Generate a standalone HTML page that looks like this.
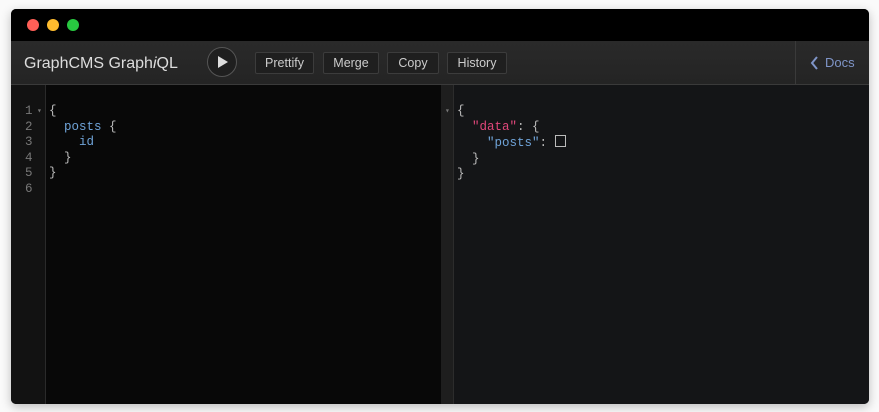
<!DOCTYPE html>
<html><head><style>
body{margin:0;width:879px;height:412px;background:#fafafa;position:relative;overflow:hidden;font-family:"Liberation Sans",sans-serif}
.win{position:absolute;left:11px;top:9px;width:858px;height:395px;border-radius:5px;overflow:hidden;background:#0a0a0a;box-shadow:0 3px 10px rgba(0,0,0,.25)}
.title{position:absolute;left:0;top:0;width:100%;height:32px;background:#000}
.dot{position:absolute;top:10px;width:12px;height:12px;border-radius:50%}
.tb{position:absolute;left:0;top:32px;width:100%;height:43px;background:linear-gradient(#2a2a2a,#242424);border-bottom:1px solid #3a3a3a}
.logo{position:absolute;left:13px;top:14px;font-size:16px;color:#ddd}
.play{position:absolute;left:196px;top:6px;width:28px;height:28px;border-radius:50%;border:1px solid #555;background:#1f1f1f}
.btn{position:absolute;top:11px;height:20px;border:1px solid #3c3c3c;background:#1f1f1f;border-radius:2px;color:#ccc;font-size:12.5px;line-height:20px;text-align:center}
.docs{position:absolute;left:784px;top:0;width:74px;height:43px;border-left:1px solid #3a3a3a;color:#7f95c8;font-size:13px;line-height:43px}
.code{position:absolute;font-family:"Liberation Mono",monospace;font-size:12.5px;line-height:15.5px;white-space:pre}
</style></head><body>
<div class="win">
<div class="title">
<div class="dot" style="left:16px;background:#fe5f57"></div>
<div class="dot" style="left:36px;background:#febc2e"></div>
<div class="dot" style="left:56px;background:#28c840"></div>
</div>
<div class="tb">
<div class="logo">GraphCMS Graph<i>i</i>QL</div>
<div class="play"><svg width="28" height="28" style="position:absolute;left:0;top:0"><path d="M10 8 L20 14 L10 20Z" fill="#ddd"/></svg></div>
<div class="btn" style="left:244px;width:57px">Prettify</div>
<div class="btn" style="left:312px;width:54px">Merge</div>
<div class="btn" style="left:376px;width:50px">Copy</div>
<div class="btn" style="left:436px;width:58px">History</div>
<div class="docs"><svg width="10" height="14" style="position:absolute;left:14px;top:15px"><path d="M7 1 L2 7 L7 13" stroke="#7f95c8" stroke-width="2" fill="none"/></svg><span style="position:absolute;left:29px">Docs</span></div>
</div>
<div style="position:absolute;left:0;top:76px;width:34px;height:319px;background:#121212;border-right:1px solid #2a2a2a"></div>
<div style="position:absolute;left:35px;top:76px;width:395px;height:319px;background:#080808"></div>
<div style="position:absolute;left:430px;top:76px;width:12px;height:319px;background:#1e1e1e;border-right:1px solid #2c2c2c"></div>
<div style="position:absolute;left:443px;top:76px;width:415px;height:319px;background:#141517"></div>
<div class="code" style="left:14px;top:95px;color:#777">1
2
3
4
5
6</div>
<div class="code" style="left:26px;top:95px;color:#777;font-size:8px">▾</div>
<div class="code" style="left:38px;top:95px;color:#bbb">{
  <span style="color:#6fa3d8">posts</span> {
    <span style="color:#6fa3d8">id</span>
  }
}</div>
<div class="code" style="left:434px;top:95px;color:#777;font-size:8px">▾</div>
<div class="code" style="left:446px;top:95px;color:#bbb">{
  <span style="color:#e0477a">"data"</span>: {
    <span style="color:#6fa3d8">"posts"</span>: <span style="display:inline-block;width:9px;height:10px;border:1px solid #bbb;vertical-align:-1px"></span>
  }
}</div>
</div>
</body></html>
